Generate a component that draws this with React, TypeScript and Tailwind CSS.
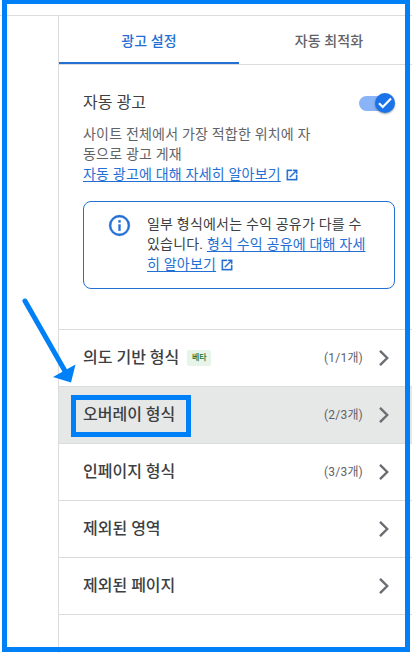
import type { ReactNode } from "react";

interface FormatRow {
  label: string;
  count?: string;
  beta?: boolean;
  active?: boolean;
}

const rows: FormatRow[] = [
  { label: "의도 기반 형식", count: "(1/1개)", beta: true },
  { label: "오버레이 형식", count: "(2/3개)", active: true },
  { label: "인페이지 형식", count: "(3/3개)" },
  { label: "제외된 영역" },
  { label: "제외된 페이지" },
];

function ExternalIcon() {
  return (
    <svg viewBox="0 0 24 24" className="ml-1 inline-block size-3.5 align-[-3px]" fill="#236fd3" stroke="#236fd3" strokeWidth="0.6">
      <path d="M19 19H5V5h7V3H3v18h18v-9h-2v7zM14 3v2h3.59l-9.83 9.83 1.41 1.41L19 6.41V10h2V3h-7z" />
    </svg>
  );
}

function HelpLink({ children }: { children: ReactNode }) {
  return (
    <>
      <a href="#" className="text-[#236fd3] underline decoration-1 underline-offset-2">
        {children}
      </a>
      <ExternalIcon />
    </>
  );
}

function Toggle() {
  return (
    <div className="mt-0.5 flex h-5 w-9 items-center">
      <div className="flex h-[15px] w-8 items-center rounded-full bg-[#8ab4f8]">
        <span className="ml-4 flex size-5 shrink-0 items-center justify-center rounded-full bg-[#1a73e8] shadow-[0_1px_2px_rgba(60,64,67,0.5)]">
          <svg viewBox="0 0 20 20" className="size-5" fill="none" stroke="#fff" strokeWidth="2.2">
            <path d="M4 10.2l3.8 3.8 8.2-8.4" />
          </svg>
        </span>
      </div>
    </div>
  );
}

function InfoBox() {
  return (
    <div className="mt-[17px] flex h-22 w-[312px] rounded-lg border border-[#236fd3] pt-3 pl-6">
      <svg viewBox="0 0 24 24" className="-ml-px mt-[-1px] size-[25px] shrink-0" fill="#236fd3" stroke="#236fd3" strokeWidth="0.3">
        <path d="M11 7h2v2h-2zm0 4h2v6h-2zm1-9a10 10 0 1 0 0 20 10 10 0 0 0 0-20zm0 18a8 8 0 1 1 0-16 8 8 0 0 1 0 16z" />
      </svg>
      <p className="ml-[15px] text-sm/5 tracking-[0.2px] whitespace-nowrap text-[#3c4043]">
        일부 형식에서는 수익 공유가 다를 수
        <br />
        있습니다. <a href="#" className="text-[#236fd3] underline decoration-1 underline-offset-2">형식 수익 공유에 대해 자세</a>
        <br />
        <HelpLink>히 알아보기</HelpLink>
      </p>
    </div>
  );
}

function Row({ label, count, beta, active }: FormatRow) {
  return (
    <div className={`flex h-[57px] items-center border-t border-[#dadce0] pl-6 ${active ? "bg-[#e6e8e7]" : ""}`}>
      <span className="text-base/6 font-medium text-[#3c4043]">{label}</span>
      {beta && (
        <span className="ml-2 flex h-4 w-6 items-center justify-center rounded-xs bg-[#e6f4ea] text-[8px] font-medium text-[#137333]">
          베타
        </span>
      )}
      <span className="ml-auto text-xs tracking-[0.2px] text-[#5f6368]">{count}</span>
      <svg viewBox="0 0 10 16" className="mr-[23px] ml-4 h-4 w-2.5" fill="none" stroke="#6b6f74" strokeWidth="2.4">
        <path d="M1 .8L8.2 8 1 15.2" />
      </svg>
    </div>
  );
}

export default function App() {
  return (
    <div className="relative h-[653px] w-[412px] overflow-hidden bg-white pt-[15px] font-[Roboto,'Noto_Sans_CJK_KR',sans-serif]">
      <div className="flex h-full border-t border-[#dadce0]">
        <div className="w-[58px] shrink-0" />
        <main className="min-w-0 flex-1 border-l border-[#dadce0]">
          <nav className="flex h-[49px] border-b border-[#dadce0] text-sm font-medium tracking-[0.1px]">
            <div className="flex w-[180px] shrink-0 items-center justify-center border-b-2 border-[#236fd3] pt-1 text-[#236fd3]">
              광고 설정
            </div>
            <div className="flex w-[180px] shrink-0 items-center justify-center pt-0.5 text-[#5f6368]">자동 최적화</div>
          </nav>

          <section className="h-[264px] pt-[25px] pl-6">
            <div className="flex h-6 items-center justify-between pr-[17px]">
              <h2 className="pt-0.5 text-base/6 text-[#3c4043]">자동 광고</h2>
              <Toggle />
            </div>
            <p className="mt-2.5 text-sm/5 tracking-[0.2px] whitespace-nowrap text-[#5f6368]">
              사이트 전체에서 가장 적합한 위치에 자
              <br />
              동으로 광고 게재
              <br />
              <HelpLink>자동 광고에 대해 자세히 알아보기</HelpLink>
            </p>
            <InfoBox />
          </section>

          {rows.map((row) => (
            <Row key={row.label} {...row} />
          ))}
          <div className="border-t border-[#dadce0]" />
        </main>
      </div>

      {/* Annotations over the panel */}
      <div className="pointer-events-none absolute -top-px left-0.5 h-[653px] w-[408px] border-5 border-[#0080f6]" />
      <div className="pointer-events-none absolute top-[395px] left-[71px] h-[42px] w-[120px] border-5 border-[#0080f6]" />
      <svg className="pointer-events-none absolute top-[295px] left-5 h-[90px] w-[60px]" viewBox="20 295 60 90">
        <path d="M25 301L65 371" stroke="#0080f6" strokeWidth="5" strokeLinecap="round" />
        <path d="M71 382.5L53 377L75.5 364.5Z" fill="#0080f6" />
      </svg>
    </div>
  );
}
